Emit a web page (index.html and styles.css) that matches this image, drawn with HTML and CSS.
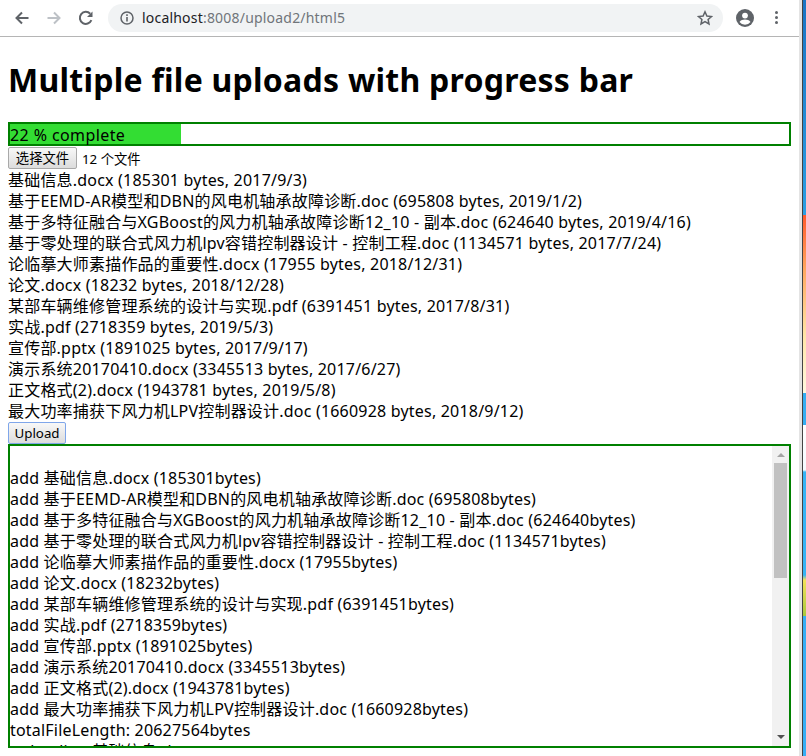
FILE: index.html
```html
<!DOCTYPE html>
<html lang="zh">
<head>
<meta charset="utf-8">
<title>Multiple file uploads with progress bar</title>
<link rel="stylesheet" href="styles.css">
</head>
<body>
<div class="window">
  <header class="toolbar">
    <svg class="nav" viewBox="0 0 16 16"><path class="s-dark" d="M14.500 8H2.500M8 2.500 2.500 8 8 13.500"/></svg>
    <svg class="nav" viewBox="0 0 16 16"><path class="s-light" d="M1.500 8h12M8 2.500 13.500 8 8 13.500"/></svg>
    <svg class="nav nav-last" viewBox="0 0 16 16"><path class="s-dark" d="M13.400 10.200A6 6 0 1 1 12.200 3.700"/><path class="f-dark" d="M14.500 1.500v5.500H9z"/></svg>
    <div class="omnibox">
      <svg class="info" viewBox="0 0 16 16"><circle class="s-thin" cx="8" cy="8" r="6"/><path class="f-dark" d="M7.200 7h1.600v4.500H7.200zM7.200 4.300h1.600v1.600H7.200z"/></svg>
      <span class="url"><span class="host">localhost</span>:8008/upload2/html5</span>
      <svg class="star" viewBox="0 0 16 16"><path class="s-thin" d="M8 1.800l1.900 4.200 4.600.5-3.400 3 .9 4.500L8 11.700l-4 2.300.9-4.500-3.400-3 4.600-.5z"/></svg>
    </div>
    <svg class="avatar" viewBox="0 0 18 18"><circle class="f-dark" cx="9" cy="9" r="9"/><circle class="f-white" cx="9" cy="6.600" r="2.900"/><path class="f-white" d="M3.500 13c1.200-2 3.500-2.600 5.500-2.600s4.300.6 5.500 2.600A7 7 0 0 1 9 15.700 7 7 0 0 1 3.500 13z"/></svg>
    <div class="menu"><i></i><i></i><i></i></div>
  </header>
  <main class="page">
    <h1>Multiple file uploads with progress bar</h1>
    <div class="progress"><div class="fill" style="width:22%"></div><span class="progress-label">22 % complete</span></div>
    <div class="picker"><button class="btn">选择文件</button><span class="picked">12 个文件</span></div>
    <ul class="files">
      <li>基础信息.docx (185301 bytes, 2017/9/3)</li>
      <li>基于EEMD-AR模型和DBN的风电机轴承故障诊断.doc (695808 bytes, 2019/1/2)</li>
      <li>基于多特征融合与XGBoost的风力机轴承故障诊断12_10 - 副本.doc (624640 bytes, 2019/4/16)</li>
      <li>基于零处理的联合式风力机lpv容错控制器设计 - 控制工程.doc (1134571 bytes, 2017/7/24)</li>
      <li>论临摹大师素描作品的重要性.docx (17955 bytes, 2018/12/31)</li>
      <li>论文.docx (18232 bytes, 2018/12/28)</li>
      <li>某部车辆维修管理系统的设计与实现.pdf (6391451 bytes, 2017/8/31)</li>
      <li>实战.pdf (2718359 bytes, 2019/5/3)</li>
      <li>宣传部.pptx (1891025 bytes, 2017/9/17)</li>
      <li>演示系统20170410.docx (3345513 bytes, 2017/6/27)</li>
      <li>正文格式(2).docx (1943781 bytes, 2019/5/8)</li>
      <li>最大功率捕获下风力机LPV控制器设计.doc (1660928 bytes, 2018/9/12)</li>
    </ul>
    <button class="btn btn-focus">Upload</button>
    <div class="log">
      <div class="log-text">
        <p>&nbsp;</p>
        <p>add 基础信息.docx (185301bytes)</p>
        <p>add 基于EEMD-AR模型和DBN的风电机轴承故障诊断.doc (695808bytes)</p>
        <p>add 基于多特征融合与XGBoost的风力机轴承故障诊断12_10 - 副本.doc (624640bytes)</p>
        <p>add 基于零处理的联合式风力机lpv容错控制器设计 - 控制工程.doc (1134571bytes)</p>
        <p>add 论临摹大师素描作品的重要性.docx (17955bytes)</p>
        <p>add 论文.docx (18232bytes)</p>
        <p>add 某部车辆维修管理系统的设计与实现.pdf (6391451bytes)</p>
        <p>add 实战.pdf (2718359bytes)</p>
        <p>add 宣传部.pptx (1891025bytes)</p>
        <p>add 演示系统20170410.docx (3345513bytes)</p>
        <p>add 正文格式(2).docx (1943781bytes)</p>
        <p>add 最大功率捕获下风力机LPV控制器设计.doc (1660928bytes)</p>
        <p>totalFileLength: 20627564bytes</p>
        <p>uploading 基础信息.docx</p>
      </div>
      <div class="scrollbar">
        <span class="arrow-up"></span>
        <div class="track"><div class="thumb"></div></div>
        <span class="arrow-down"></span>
      </div>
    </div>
  </main>
</div>
<aside class="edge"><div class="edge-gray"></div><div class="edge-dark"></div><div class="edge-desktop"></div></aside>
</body>
</html>
```
FILE: styles.css
```css
* { box-sizing: border-box; }
html, body { margin: 0; height: 756px; overflow: hidden; background: #fff; }
body { display: flex; font-family: "Noto Sans", "Noto Sans CJK SC", sans-serif; font-size: 16px; color: #000; }
.window { width: 799px; height: 756px; flex: none; overflow: hidden; }
.toolbar { height: 37px; border-bottom: 1px solid #b5b5b5; display: flex; align-items: center; padding: 0 0 1px 14px; background: #fff; }
.nav { width: 16px; height: 16px; margin-right: 16px; flex: none; }
.nav-last { margin-right: 14px; }
.s-dark { fill: none; stroke: #5f6368; stroke-width: 2; }
.s-light { fill: none; stroke: #bdc1c6; stroke-width: 2; }
.s-thin { fill: none; stroke: #5f6368; stroke-width: 1.5; }
.f-dark { fill: #5f6368; }
.f-white { fill: #fff; }
.omnibox { width: 615px; height: 28px; border-radius: 14px; background: #f1f3f4; display: flex; align-items: center; padding: 0 10px 0 11px; flex: none; }
.info { width: 16px; height: 16px; flex: none; }
.url { margin-left: 7px; font-size: 14px; letter-spacing: 0.2px; color: #70757a; flex: 1; }
.host { color: #202124; }
.star { width: 16px; height: 16px; flex: none; }
.avatar { width: 18px; height: 18px; margin-left: 13px; flex: none; }
.menu { margin-left: 21px; display: flex; flex-direction: column; gap: 2px; }
.menu i { display: block; width: 3px; height: 3px; border-radius: 50%; background: #5f6368; }
.page { padding: 0 8px; }
h1 { margin: 21px 0 0; font-size: 32px; line-height: 44px; font-weight: 700; letter-spacing: 0.25px; }
.progress { position: relative; height: 24px; margin-top: 20px; border: 2px solid green; background: #fff; }
.fill { height: 100%; background: #33dd33; }
.progress-label { position: absolute; left: 0; top: 0; line-height: 22px; font-size: 16px; letter-spacing: 0.4px; }
.picker { display: flex; align-items: center; height: 23px; padding-top: 1px; }
.btn { height: 22px; padding: 0 0 1px; width: 69px; font: 13.33px "Noto Sans", "Noto Sans CJK SC", sans-serif; color: #000; border: 1px solid #a9a9a9; border-radius: 2px; background: linear-gradient(#f8f8f8, #dcdcdc); display: block; }
.btn-focus { width: 58px; border-color: #7fa6ea; }
.picked { margin-left: 5px; font-size: 13.33px; }
.files { list-style: none; margin: 0; padding: 1px 0 0; letter-spacing: 0.2px; }
.files li { line-height: 21px; height: 21px; white-space: nowrap; }
.log { display: flex; height: 304px; border: 2px solid green; background: #fff; }
.log-text { flex: 1; min-width: 0; overflow: hidden; padding-top: 1px; letter-spacing: 0.2px; }
.log-text p { margin: 0; line-height: 21px; height: 21px; white-space: nowrap; }
.scrollbar { width: 17px; flex: none; background: #f1f1f1; display: flex; flex-direction: column; align-items: center; }
.arrow-up { width: 0; height: 0; margin: 7px 0 6px; border: 4px solid transparent; border-top: 0; border-bottom: 4px solid #a3a3a3; }
.track { flex: 1; width: 100%; }
.thumb { width: 13px; height: 115px; margin: 0 auto; background: #c1c1c1; }
.arrow-down { width: 0; height: 0; margin: 6px 0 7px; border: 4px solid transparent; border-bottom: 0; border-top: 4px solid #505050; }
.edge { flex: 1; display: flex; height: 756px; }
.edge-gray { width: 3px; background: #e4e4e4; }
.edge-dark { width: 1px; background: #444; }
.edge-desktop { flex: 1; background: linear-gradient(#1a74c4 0, #2a9fe3 215px, #ff5a2c 215px, #ffa860 270px, #ffe6a8 337px, #fff8e0 393px, #35aef2 393px, #35aef2 425px, #fff 425px, #f4fbff 470px, #35b4f5 472px, #35b4f5 575px, #f3e25a 580px, #a8c83c 616px, #35aef5 616px, #35aef5 100%); }
```
